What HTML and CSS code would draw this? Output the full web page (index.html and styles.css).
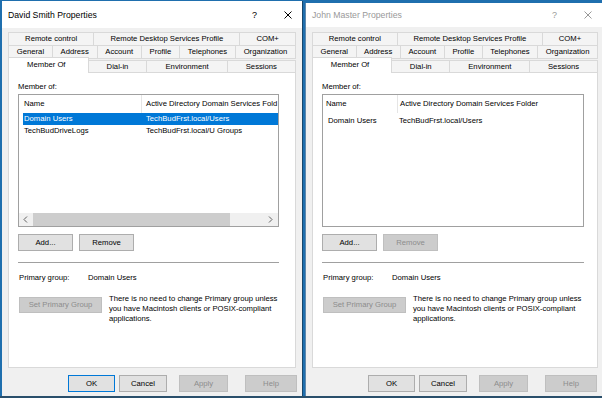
FILE: index.html
```html
<!DOCTYPE html>
<html lang="en">
  <head>
    <meta charset="UTF-8" />
    <title>Properties</title>
    <link rel="stylesheet" href="styles.css">
  </head>

  <body>
    <div class="desk">
      <!-- active dialog -->
      <div class="dlg active">
        <div class="titlebar">
          <div class="ttl">David Smith Properties</div>
          <div class="qmark">?</div>
          <svg class="xbtn" width="8" height="8" viewBox="0 0 8 8"><path d="M0.5 0.5L7.5 7.5M7.5 0.5L0.5 7.5" stroke="#000" stroke-width="1"/></svg>
        </div>
        <div class="tabs">
          <div class="tabrow">
            <div class="tab">Remote control</div>
            <div class="tab">Remote Desktop Services Profile</div>
            <div class="tab">COM+</div>
          </div>
          <div class="tabrow">
            <div class="tab">General</div>
            <div class="tab">Address</div>
            <div class="tab">Account</div>
            <div class="tab">Profile</div>
            <div class="tab">Telephones</div>
            <div class="tab">Organization</div>
          </div>
          <div class="tabrow front">
            <div class="tab sel">Member Of</div>
            <div class="tab">Dial-in</div>
            <div class="tab">Environment</div>
            <div class="tab">Sessions</div>
          </div>
        </div>
        <div class="panel">
          <div class="lbl">Member of:</div>
          <div class="list wide">
            <div class="lhead">
              <div class="c1">Name</div>
              <div class="c2">Active Directory Domain Services Fold</div>
            </div>
            <div class="lrow sel">
              <div class="c1">Domain Users</div>
              <div class="c2">TechBudFrst.local/Users</div>
            </div>
            <div class="lrow">
              <div class="c1">TechBudDriveLogs</div>
              <div class="c2">TechBudFrst.local/U Groups</div>
            </div>
            <div class="lfill"></div>
            <div class="hscroll">
              <svg class="arr" width="5" height="7" viewBox="0 0 5 7"><path d="M4 0.5L1 3.5L4 6.5" fill="none" stroke="#606060" stroke-width="1"/></svg>
              <div class="thumb"></div>
              <div class="trk"></div>
              <svg class="arr" width="5" height="7" viewBox="0 0 5 7"><path d="M1 0.5L4 3.5L1 6.5" fill="none" stroke="#606060" stroke-width="1"/></svg>
            </div>
          </div>
          <div class="btnrow">
            <div class="btn">Add...</div>
            <div class="btn">Remove</div>
          </div>
          <div class="sep"></div>
          <div class="pg">
            <div class="pgl">Primary group:</div>
            <div>Domain Users</div>
          </div>
          <div class="setpg">
            <div class="btn off big">Set Primary Group</div>
            <div class="note">There is no need to change Primary group unless you have Macintosh clients or POSIX-compliant applications.</div>
          </div>
        </div>
        <div class="foot">
          <div class="btn ok def">OK</div>
          <div class="btn cancel">Cancel</div>
          <div class="btn apply off">Apply</div>
          <div class="btn help off">Help</div>
        </div>
      </div>

      <!-- inactive dialog -->
      <div class="dlg idle">
        <div class="titlebar">
          <div class="ttl">John Master Properties</div>
          <div class="qmark">?</div>
          <svg class="xbtn" width="8" height="8" viewBox="0 0 8 8"><path d="M0.5 0.5L7.5 7.5M7.5 0.5L0.5 7.5" stroke="#999" stroke-width="1"/></svg>
        </div>
        <div class="tabs">
          <div class="tabrow">
            <div class="tab">Remote control</div>
            <div class="tab">Remote Desktop Services Profile</div>
            <div class="tab">COM+</div>
          </div>
          <div class="tabrow">
            <div class="tab">General</div>
            <div class="tab">Address</div>
            <div class="tab">Account</div>
            <div class="tab">Profile</div>
            <div class="tab">Telephones</div>
            <div class="tab">Organization</div>
          </div>
          <div class="tabrow front">
            <div class="tab sel">Member Of</div>
            <div class="tab">Dial-in</div>
            <div class="tab">Environment</div>
            <div class="tab">Sessions</div>
          </div>
        </div>
        <div class="panel">
          <div class="lbl">Member of:</div>
          <div class="list narrow">
            <div class="lhead">
              <div class="c1">Name</div>
              <div class="c2">Active Directory Domain Services Folder</div>
            </div>
            <div class="lrow">
              <div class="c1">Domain Users</div>
              <div class="c2">TechBudFrst.local/Users</div>
            </div>
            <div class="lfill"></div>
          </div>
          <div class="btnrow">
            <div class="btn">Add...</div>
            <div class="btn off">Remove</div>
          </div>
          <div class="sep"></div>
          <div class="pg">
            <div class="pgl">Primary group:</div>
            <div>Domain Users</div>
          </div>
          <div class="setpg">
            <div class="btn off big">Set Primary Group</div>
            <div class="note">There is no need to change Primary group unless you have Macintosh clients or POSIX-compliant applications.</div>
          </div>
        </div>
        <div class="foot">
          <div class="btn ok">OK</div>
          <div class="btn cancel">Cancel</div>
          <div class="btn apply off">Apply</div>
          <div class="btn help off">Help</div>
        </div>
      </div>
    </div>
  </body>
</html>
```

FILE: styles.css
```css
body {
  margin: 0;
  padding: 0;
  background: #1f6fae;
  font-family: "Liberation Sans", Arial, sans-serif;
  font-size: 7.7px;
  color: #000000;
}

.desk {
  display: flex;
  height: 396px;
  padding-left: 2px;
  align-items: flex-start;
  border-bottom: 2px solid #2a4f6b;
}

.dlg {
  display: flex;
  flex-direction: column;
  background: #f0f0f0;
  box-sizing: border-box;
}

.dlg.active {
  width: 301px;
  height: 395px;
  margin-top: 1px;
  border-right: 1px solid #17476e;
}

.dlg.idle {
  width: 297px;
  height: 393px;
  margin-top: 3px;
  margin-left: 2px;
  border-left: 1px solid #5f88ad;
}

/* title bar */
.titlebar {
  display: flex;
  align-items: center;
  height: 27px;
  padding: 0 10px 0 6px;
  background: #ffffff;
  flex-shrink: 0;
}

.ttl {
  flex: 1;
  font-size: 8.7px;
}

.qmark {
  font-size: 9px;
  margin-right: 27px;
}

.idle .titlebar {
  height: 24px;
}

.idle .ttl,
.idle .qmark {
  color: #999999;
}

/* tabs */
.tabs {
  margin: 4px 6px 0 6px;
  flex-shrink: 0;
}

.idle .tabs {
  margin-top: 5px;
  margin-left: 6px;
  margin-right: 4px;
}

.tabrow {
  display: flex;
  height: 14px;
  margin-bottom: -1px;
}

.tabrow.front {
  height: 15px;
  align-items: flex-end;
  position: relative;
  z-index: 2;
  margin-bottom: -1px;
}

.tab {
  flex: 1 1 auto;
  height: 14px;
  line-height: 12px;
  text-align: center;
  white-space: nowrap;
  border: 1px solid #d9d9d9;
  margin-left: -1px;
  background: #f4f4f4;
  box-sizing: border-box;
}

.tab:first-child {
  margin-left: 0;
}

.front .tab {
  height: 13px;
  line-height: 11px;
}

.front .tab.sel {
  height: 16px;
  line-height: 13px;
  background: #ffffff;
  border-bottom: none;
  padding-right: 4px;
}

/* panel */
.panel {
  height: 296px;
  margin: 0 6px;
  padding: 9px 16px 0 9px;
  background: #ffffff;
  border: 1px solid #d9d9d9;
  box-sizing: border-box;
  flex-shrink: 0;
}

.idle .panel {
  margin: 0 4px 0 6px;
  padding-right: 13px;
}

.lbl {
  line-height: 10px;
  margin-bottom: 2px;
}

.list {
  display: flex;
  flex-direction: column;
  height: 133px;
  border: 1px solid #a0a0a0;
  box-sizing: border-box;
  overflow: hidden;
}

.lhead {
  display: flex;
  height: 18px;
  line-height: 18px;
  white-space: nowrap;
}

.lrow {
  display: flex;
  height: 12px;
  line-height: 12px;
  white-space: nowrap;
  margin-left: 4px;
}

.lrow.sel {
  background: #0078d7;
  color: #ffffff;
}

.c1 {
  flex-shrink: 0;
  overflow: hidden;
}

.c2 {
  flex-shrink: 0;
}

.wide .lhead .c1 {
  width: 117px;
  padding-left: 5px;
  border-right: 1px solid #e5e5e5;
}

.wide .lhead .c2 {
  padding-left: 4px;
}

.wide .lrow .c1 {
  width: 117px;
  padding-left: 1px;
}

.wide .lrow .c2 {
  padding-left: 5px;
}

.narrow .lhead .c1 {
  width: 71px;
  padding-left: 3px;
  border-right: 1px solid #e5e5e5;
}

.narrow .lhead .c2 {
  padding-left: 2px;
}

.narrow .lrow {
  margin-left: 0;
  margin-top: 2px;
}

.narrow .lrow .c1 {
  width: 71px;
  padding-left: 5px;
}

.narrow .lrow .c2 {
  padding-left: 0;
}

.lfill {
  flex: 1;
}

.hscroll {
  display: flex;
  align-items: center;
  height: 13px;
  background: #f0f0f0;
  flex-shrink: 0;
}

.arr {
  margin: 0 5px 0 4px;
}

.thumb {
  width: 197px;
  height: 13px;
  background: #cdcdcd;
}

.trk {
  flex: 1;
}

/* buttons */
.btn {
  height: 17px;
  line-height: 15px;
  text-align: center;
  background: #e1e1e1;
  border: 1px solid #adadad;
  box-sizing: border-box;
  white-space: nowrap;
}

.btn.def {
  border-color: #0078d7;
}

.btn.off {
  background: #cccccc;
  border-color: #bfbfbf;
  color: #8c8c8c;
}

.btnrow {
  display: flex;
  gap: 6px;
  margin-top: 7px;
}

.btnrow .btn {
  width: 55px;
}

.sep {
  height: 1px;
  background: #a0a0a0;
  margin-top: 11px;
}

.pg {
  display: flex;
  line-height: 10px;
  margin-top: 10px;
  padding-left: 1px;
}

.pgl {
  width: 69px;
}

.setpg {
  display: flex;
  align-items: flex-start;
  margin-top: 14px;
  padding-left: 1px;
}

.btn.big {
  width: 83px;
  flex-shrink: 0;
  height: 16px;
  line-height: 14px;
}

.note {
  margin-left: 7px;
  margin-top: -3px;
  line-height: 10px;
}

/* footer */
.foot {
  display: flex;
  justify-content: flex-end;
  padding: 7px 5px 0 0;
}

.foot .ok {
  width: 47px;
}

.foot .cancel {
  width: 48px;
  margin-left: 4px;
}

.foot .apply {
  width: 49px;
  margin-left: 12px;
}

.foot .help {
  width: 52px;
  margin-left: 17px;
}
```
